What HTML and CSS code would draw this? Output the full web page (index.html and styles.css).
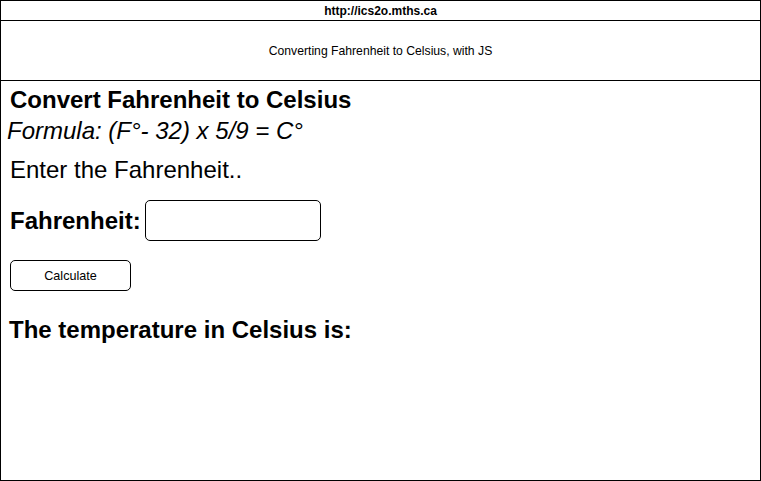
FILE: index.html
```html
<!DOCTYPE html>
<html>
<head>
<meta charset="utf-8">
<link rel="stylesheet" href="styles.css">
</head>
<body>
<div class="frame">
  <div class="url">http://ics2o.mths.ca</div>
  <div class="banner">Converting Fahrenheit to Celsius, with JS</div>
  <div class="content">
    <div class="title">Convert Fahrenheit to Celsius</div>
    <div class="formula">Formula: (F°- 32) x 5/9 = C°</div>
    <div class="prompt">Enter the Fahrenheit..</div>
    <div class="field">
      <span class="label">Fahrenheit:</span>
      <div class="input"></div>
    </div>
    <div class="button">Calculate</div>
    <div class="result">The temperature in Celsius is:</div>
  </div>
</div>
</body>
</html>
```
FILE: styles.css
```css
html, body {
  margin: 0;
  padding: 0;
  background: #fff;
}
body {
  font-family: "Liberation Sans", Arial, sans-serif;
  color: #000;
}
.frame {
  width: 759px;
  height: 479px;
  border: 1px solid #000;
  display: flex;
  flex-direction: column;
}
.url {
  height: 20px;
  box-sizing: border-box;
  padding-top: 1px;
  border-bottom: 1px solid #000;
  font-size: 12px;
  font-weight: bold;
  display: flex;
  align-items: center;
  justify-content: center;
}
.banner {
  height: 60px;
  box-sizing: border-box;
  border-bottom: 1px solid #000;
  font-size: 12.2px;
  display: flex;
  align-items: center;
  justify-content: center;
}
.content {
  flex: 1;
  padding-left: 10px;
}
.title {
  font-size: 24px;
  font-weight: bold;
  line-height: 28px;
  margin-top: 5px;
  margin-left: -1px;
}
.formula {
  font-size: 24px;
  font-style: italic;
  line-height: 28px;
  margin-top: 3px;
  margin-left: -4px;
}
.prompt {
  font-size: 24px;
  line-height: 28px;
  margin-top: 11px;
  margin-left: -1px;
}
.field {
  display: flex;
  align-items: center;
  margin-top: 16px;
}
.label {
  font-size: 24px;
  font-weight: bold;
  margin-left: -1px;
  margin-right: 4px;
}
.input {
  width: 174px;
  height: 39px;
  border: 1px solid #000;
  border-radius: 5px;
}
.button {
  width: 119px;
  height: 29px;
  border: 1px solid #000;
  border-radius: 5px;
  font-size: 12.6px;
  display: flex;
  align-items: center;
  justify-content: center;
  margin-top: 19px;
  margin-left: -1px;
}
.result {
  font-size: 24px;
  font-weight: bold;
  line-height: 28px;
  margin-top: 25px;
  margin-left: -2px;
}
```
